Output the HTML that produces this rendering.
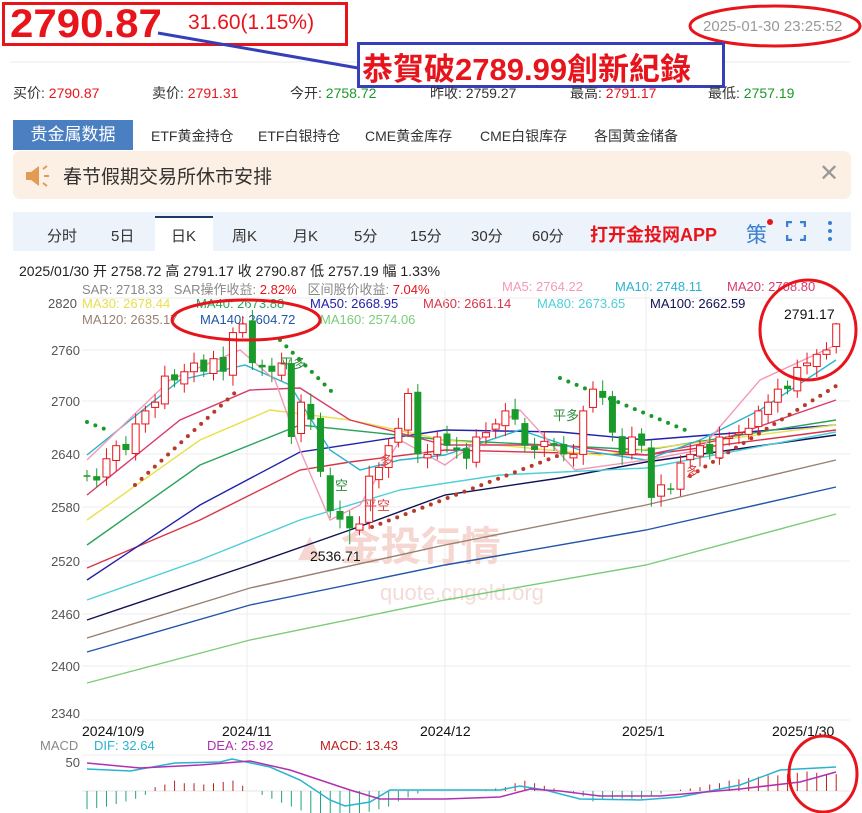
<!DOCTYPE html>
<html><head><meta charset="utf-8"><style>
body{margin:0;width:862px;height:813px;overflow:hidden;background:#fff;font-family:"Liberation Sans","Noto Sans CJK SC",sans-serif;position:relative}
.a{position:absolute;white-space:nowrap}
</style></head><body>
<div class="a" style="left:2px;top:2px;width:346px;height:44px;border:3px solid #e8141c;box-sizing:border-box"></div>
<div class="a" style="left:10px;top:2px;font-size:40px;font-weight:bold;color:#e8141c;transform:scale(1.05,1);transform-origin:left">2790.87</div>
<div class="a" style="left:188px;top:11px;font-size:21px;color:#e8141c">31.60(1.15%)</div>
<div class="a" style="left:703px;top:18px;font-size:15px;color:#999">2025-01-30 23:25:52</div>
<svg class="a" style="left:0;top:0" width="862" height="100">
<ellipse cx="775" cy="26" rx="85" ry="20" fill="none" stroke="#e8141c" stroke-width="3"/>
<line x1="10" y1="62" x2="850" y2="62" stroke="#e8e8e8"/>
<line x1="158" y1="33" x2="358" y2="68" stroke="#3540b8" stroke-width="3"/>
</svg>
<div class="a" style="left:357px;top:42px;width:368px;height:46px;border:3px solid #3540b8;box-sizing:border-box;background:#fff"></div>
<div class="a" style="left:362px;top:44px;font-size:31px;font-weight:bold;color:#e8141c">恭賀破2789.99創新紀錄</div>
<div class="a" style="left:13px;top:83px;font-size:14px;color:#333">买价: <span style="color:#e8141c">2790.87</span></div>
<div class="a" style="left:152px;top:83px;font-size:14px;color:#333">卖价: <span style="color:#e8141c">2791.31</span></div>
<div class="a" style="left:290px;top:83px;font-size:14px;color:#333">今开: <span style="color:#1a9a2a">2758.72</span></div>
<div class="a" style="left:430px;top:83px;font-size:14px;color:#333">昨收: 2759.27</div>
<div class="a" style="left:570px;top:83px;font-size:14px;color:#333">最高: <span style="color:#e8141c">2791.17</span></div>
<div class="a" style="left:708px;top:83px;font-size:14px;color:#333">最低: <span style="color:#1a9a2a">2757.19</span></div>
<div class="a" style="left:13px;top:120px;width:120px;height:30px;background:#4a7fc1;color:#fff;font-size:17px;line-height:30px;text-align:center">贵金属数据</div>
<div class="a" style="left:151px;top:126px;font-size:14px;color:#333">ETF黄金持仓</div>
<div class="a" style="left:258px;top:126px;font-size:14px;color:#333">ETF白银持仓</div>
<div class="a" style="left:365px;top:126px;font-size:14px;color:#333">CME黄金库存</div>
<div class="a" style="left:480px;top:126px;font-size:14px;color:#333">CME白银库存</div>
<div class="a" style="left:594px;top:126px;font-size:14px;color:#333">各国黄金储备</div>
<div class="a" style="left:13px;top:151px;width:838px;height:48px;background:#fcefe4;border-radius:7px"></div>
<svg class="a" style="left:24px;top:164px" width="30" height="24"><path d="M2 8h5l8-6v20l-8-6H2z" fill="#e29a55"/><path d="M19 5l4-3M20 12h5M19 19l4 3" stroke="#e29a55" stroke-width="2"/></svg>
<div class="a" style="left:63px;top:162px;font-size:19px;color:#333">春节假期交易所休市安排</div>
<div class="a" style="left:819px;top:159px;font-size:24px;color:#999">✕</div>
<div class="a" style="left:13px;top:212px;width:838px;height:39px;background:#edf3fb"></div>
<div class="a" style="left:155px;top:216px;width:58px;height:35px;background:#fff;border-top:2px solid #1c3a6c"></div>
<div class="a" style="left:47px;top:225px;font-size:15px;color:#333">分时</div>
<div class="a" style="left:111px;top:225px;font-size:15px;color:#333">5日</div>
<div class="a" style="left:171px;top:225px;font-size:15px;color:#333">日K</div>
<div class="a" style="left:232px;top:225px;font-size:15px;color:#333">周K</div>
<div class="a" style="left:293px;top:225px;font-size:15px;color:#333">月K</div>
<div class="a" style="left:354px;top:225px;font-size:15px;color:#333">5分</div>
<div class="a" style="left:410px;top:225px;font-size:15px;color:#333">15分</div>
<div class="a" style="left:471px;top:225px;font-size:15px;color:#333">30分</div>
<div class="a" style="left:532px;top:225px;font-size:15px;color:#333">60分</div>
<div class="a" style="left:590px;top:221px;font-size:18px;font-weight:bold;color:#e8141c">打开金投网APP</div>
<div class="a" style="left:746px;top:219px;font-size:21px;color:#3a7fd0">策</div>
<div class="a" style="left:767px;top:219px;width:6px;height:6px;border-radius:3px;background:#e8141c"></div>
<svg class="a" style="left:786px;top:221px" width="20" height="20"><path d="M1 6V1h5M14 1h5v5M19 14v5h-5M6 19H1v-5" fill="none" stroke="#3a7fd0" stroke-width="2.5"/></svg>
<svg class="a" style="left:826px;top:220px" width="8" height="22"><circle cx="4" cy="3" r="2" fill="#3a7fd0"/><circle cx="4" cy="11" r="2" fill="#3a7fd0"/><circle cx="4" cy="19" r="2" fill="#3a7fd0"/></svg>
<div class="a" style="left:19px;top:261px;font-size:14px;color:#222">2025/01/30 开 2758.72 高 2791.17 收 2790.87 低 2757.19 幅 1.33%</div>
<div class="a" style="left:82px;top:279px;font-size:13px;color:#888">SAR: 2718.33 &nbsp; SAR操作收益: <span style="color:#e8141c">2.82%</span> &nbsp; 区间股价收益: <span style="color:#e8141c">7.04%</span></div>
<div class="a" style="left:502px;top:279px;font-size:13px;color:#f29ab8">MA5: 2764.22</div>
<div class="a" style="left:615px;top:279px;font-size:13px;color:#29b3cf">MA10: 2748.11</div>
<div class="a" style="left:727px;top:279px;font-size:13px;color:#d93a6b">MA20: 2708.80</div>
<div class="a" style="left:48px;top:296px;font-size:13px;color:#555">2820</div>
<div class="a" style="left:82px;top:296px;font-size:13px;color:#e8e04a">MA30: 2678.44</div>
<div class="a" style="left:196px;top:296px;font-size:13px;color:#2aa35a">MA40: 2673.88</div>
<div class="a" style="left:310px;top:296px;font-size:13px;color:#2222aa">MA50: 2668.95</div>
<div class="a" style="left:423px;top:296px;font-size:13px;color:#d8334a">MA60: 2661.14</div>
<div class="a" style="left:537px;top:296px;font-size:13px;color:#4ccfd8">MA80: 2673.65</div>
<div class="a" style="left:650px;top:296px;font-size:13px;color:#111155">MA100: 2662.59</div>
<div class="a" style="left:82px;top:312px;font-size:13px;color:#9a8070">MA120: 2635.17</div>
<div class="a" style="left:200px;top:312px;font-size:13px;color:#2255aa">MA140: 2604.72</div>
<div class="a" style="left:320px;top:312px;font-size:13px;color:#7acc7a">MA160: 2574.06</div>
<svg class="a" style="left:0;top:0" width="862" height="813" id="ch">
<g stroke="#ececec"><line x1="82" y1="298" x2="850" y2="298"/><line x1="82" y1="350" x2="850" y2="350"/><line x1="82" y1="401" x2="850" y2="401"/><line x1="82" y1="454" x2="850" y2="454"/><line x1="82" y1="507" x2="850" y2="507"/><line x1="82" y1="561" x2="850" y2="561"/><line x1="82" y1="614" x2="850" y2="614"/><line x1="82" y1="666" x2="850" y2="666"/><line x1="82" y1="720" x2="850" y2="720"/><line x1="82" y1="755" x2="850" y2="755"/>
<line x1="247" y1="290" x2="247" y2="813"/><line x1="445" y1="290" x2="445" y2="813"/><line x1="646" y1="290" x2="646" y2="813"/></g>
<g font-size="13" fill="#555" text-anchor="end"><text x="80" y="355">2760</text><text x="80" y="406">2700</text><text x="80" y="459">2640</text><text x="80" y="512">2580</text><text x="80" y="566">2520</text><text x="80" y="619">2460</text><text x="80" y="671">2400</text><text x="80" y="718">2340</text><text x="80" y="767">50</text></g>
<text x="290" y="560" font-size="40" fill="#f6d6d0" font-weight="bold">▲ 金投行情</text>
<text x="380" y="600" font-size="22" fill="#f3dcd8">quote.cngold.org</text>
<g font-size="14" fill="#111"><text x="82" y="736">2024/10/9</text><text x="222" y="736">2024/11</text><text x="420" y="736">2024/12</text><text x="622" y="736">2025/1</text><text x="772" y="736">2025/1/30</text></g>
<g font-size="13"><text x="40" y="750" fill="#888">MACD</text><text x="94" y="750" fill="#29b3cf">DIF: 32.64</text><text x="207" y="750" fill="#b030b0">DEA: 25.92</text><text x="320" y="750" fill="#c02020">MACD: 13.43</text></g>
<g fill="none" stroke-width="1.4">
<polyline stroke="#7acc7a" points="87,683 250,640 445,600 646,565 836,514"/>
<polyline stroke="#2255aa" points="87,652 250,605 445,565 646,530 836,487"/>
<polyline stroke="#9a8070" points="87,638 250,588 445,545 646,505 836,460"/>
<polyline stroke="#111155" points="87,620 250,565 350,530 445,495 560,478 646,462 836,435"/>
<polyline stroke="#4ccfd8" points="87,600 200,560 300,520 400,490 500,475 646,468 836,432"/>
<polyline stroke="#d8334a" points="87,568 200,520 300,470 350,462 445,450 646,455 836,430"/>
<polyline stroke="#2222aa" points="87,580 200,505 300,452 445,430 560,432 646,440 836,425"/>
<polyline stroke="#2aa35a" points="87,545 200,465 300,425 445,440 646,450 836,420"/>
<polyline stroke="#e8e04a" points="87,520 200,440 270,410 350,420 445,440 600,455 836,425"/>
<polyline stroke="#d93a6b" points="87,495 180,420 250,390 300,388 350,420 445,445 560,445 646,455 720,440 836,400"/>
<polyline stroke="#29b3cf" points="87,455 180,380 245,365 290,385 330,450 360,470 400,460 445,455 520,430 580,450 646,460 700,440 760,410 836,360"/>
<polyline stroke="#f29ab8" points="87,460 170,380 240,350 275,380 300,450 330,520 360,505 400,440 445,465 520,410 575,470 646,460 700,450 760,380 836,345"/>
</g>
<g stroke-linecap="round" stroke-width="4" stroke-dasharray="0 9" fill="none">
<polyline stroke="#1a9a2a" points="87,422 112,432"/><polyline stroke="#1a9a2a" points="280,340 335,395"/><polyline stroke="#1a9a2a" points="560,378 690,432"/>
<polyline stroke="#b83a2a" points="135,485 240,388"/><polyline stroke="#b83a2a" points="372,527 560,455"/><polyline stroke="#b83a2a" points="690,476 836,386"/>
</g>
<g id="cd"></g>
<g font-size="13" fill="#2a8a3a"><text x="280" y="368">平多</text><text x="335" y="490">空</text><text x="553" y="420">平多</text></g>
<g font-size="13" fill="#e04040"><text x="364" y="510">平空</text><text x="380" y="465">多</text><text x="686" y="476">多</text></g>
<text x="310" y="561" font-size="14" fill="#111">2536.71</text>
<text x="784" y="319" font-size="14" fill="#111">2791.17</text>
<line x1="82" y1="791" x2="850" y2="791" stroke="#e4e4e4"/>
<g id="mb"></g>
<polyline fill="none" stroke="#29b3cf" stroke-width="1.5" points="87,769 130,771 175,763 220,762 232,759 270,767 300,780 330,800 345,806 370,802 390,790 445,790 500,790 520,786 545,790 580,799 640,800 680,797 740,785 780,770 836,767"/>
<polyline fill="none" stroke="#b030b0" stroke-width="1.5" points="87,763 140,768 200,765 250,761 290,770 350,790 380,799 445,799 500,797 530,789 560,791 600,796 660,796 740,789 800,782 836,772"/>
<g fill="none" stroke="#e8141c" stroke-width="3">
<ellipse cx="246" cy="320" rx="74" ry="20"/>
<ellipse cx="808" cy="330" rx="48" ry="50"/>
<ellipse cx="823" cy="774" rx="34" ry="38"/>
</g>
</svg>
<script>
var C=[2615,2610,2635,2650,2645,2675,2690,2700,2730,2725,2735,2745,2735,2750,2735,2780,2790,2745,2740,2735,2745,2660,2700,2680,2620,2575,2565,2555,2560,2615,2625,2650,2670,2710,2640,2640,2660,2650,2645,2635,2660,2665,2675,2690,2680,2650,2645,2655,2650,2640,2640,2690,2715,2705,2665,2640,2660,2650,2590,2605,2600,2630,2640,2650,2640,2660,2660,2665,2670,2690,2700,2715,2715,2740,2745,2755,2760,2790];
function Y(p){return 350+(2760-p)*0.87}
var s='',prev=2620;
for(var i=0;i<C.length;i++){var x=87+i*9.73,o=prev+((i*7)%5-2)*2,c=C[i];var up=c>=o;var hi=Math.max(o,c)+6+(i%3)*3,lo=Math.min(o,c)-6-(i%4)*2;if(i==27)lo=2536.7;if(i==77)hi=2791.2;
var col=up?'#e8141c':'#1a9a2a';var t=Y(Math.max(o,c)),b=Y(Math.min(o,c));if(b-t<1.5)b=t+1.5;
s+='<line x1="'+x+'" x2="'+x+'" y1="'+Y(hi)+'" y2="'+Y(lo)+'" stroke="'+col+'"/>';
s+='<rect x="'+(x-3.5)+'" y="'+t+'" width="7" height="'+(b-t)+'" '+(up?'fill="#fff" stroke="#e8141c"':'fill="#1a9a2a"')+'/>';prev=c;}
document.getElementById('cd').innerHTML=s;
var M=[-14,-13,-12,-10,-8,-6,-3,3,5,8,6,6,5,6,7,8,4,0,-3,-6,-9,-12,-15,-18,-20,-22,-22,-20,-18,-16,-14,-12,-8,-5,-2,0,0,0,0,0,0,1,2,3,6,8,6,4,2,0,-2,-4,-8,-6,-6,-6,-6,-6,-4,-2,0,1,2,3,5,6,8,9,10,11,12,12,13,14,15,14,13,13];
var m='';for(var i=0;i<M.length;i++){var x=87+i*9.73;if(M[i]==0)continue;m+='<line x1="'+x+'" x2="'+x+'" y1="791" y2="'+(791-M[i]*1.3)+'" stroke="'+(M[i]>0?'#c02020':'#20a080')+'"/>';}
document.getElementById('mb').innerHTML=m;
</script>
</body></html>
